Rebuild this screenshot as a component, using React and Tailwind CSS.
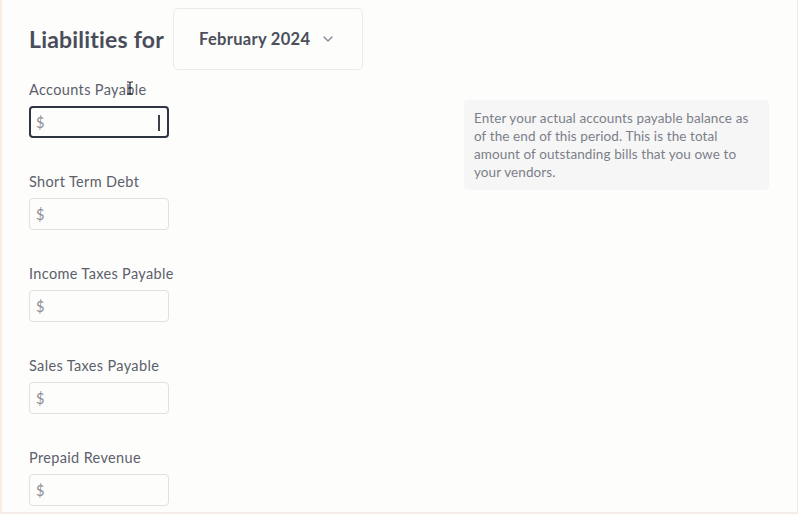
import React from "react";

const fields = [
  "Accounts Payable",
  "Short Term Debt",
  "Income Taxes Payable",
  "Sales Taxes Payable",
  "Prepaid Revenue",
];

export default function App() {
  return (
    <div
      className="w-[798px] h-[514px] bg-[#fdfdfc] border-l-2 border-l-[#fbece4] border-r border-r-[#ececec] border-b-2 border-b-[#f3ece8] overflow-hidden relative"
      style={{ fontFamily: "Lato, 'Open Sans', sans-serif" }}
    >
      <div className="flex items-center pl-[27px] pt-[8px]">
        <h1 className="text-[23px] font-bold text-[#494d59] tracking-[0.2px] mr-[9px]">Liabilities for</h1>
        <div className="w-[190px] h-[62px] border border-[#ebebee] rounded-[5px] flex items-center pl-[25px] bg-[#fdfdfc]">
          <span className="text-[16.5px] font-bold text-[#4b4f5a] tracking-[0.3px]">February 2024</span>
          <svg className="ml-[12px]" width="12" height="8" viewBox="0 0 12 8">
            <path d="M2 2 L6 6 L10 2" fill="none" stroke="#8d909a" strokeWidth="1.6" strokeLinecap="round" strokeLinejoin="round" />
          </svg>
        </div>
      </div>
      <div className="flex pl-[27px]">
        <div className="w-[435px] flex flex-col pt-[8px]">
          {fields.map((f, i) => (
            <div key={f} className="h-[92px]">
              <div className="text-[14.5px] tracking-[0.35px] text-[#5c606b] leading-[24px] h-[28px]">{f}</div>
              <div
                className={
                  i === 0
                    ? "w-[140px] h-[32px] rounded-[4px] border-2 border-[#2e3441] flex items-center pl-[5px] pt-[2px] relative"
                    : "w-[140px] h-[32px] rounded-[4px] border border-[#e0dfe3] flex items-center pl-[6px] pt-[2px]"
                }
              >
                <span className="text-[14.5px] text-[#8b8e96]">$</span>
                {i === 0 && <div className="absolute left-[127px] top-[7px] w-[1.5px] h-[16px] bg-[#3c4049]" />}
              </div>
            </div>
          ))}
        </div>
        <div className="pt-[30px]">
          <div className="w-[305px] bg-[#f6f6f7] rounded-[4px] px-[10px] py-[9px] text-[13.5px] tracking-[0.1px] leading-[18px] text-[#7c7f88]">
            Enter your actual accounts payable balance as of the end of this period. This is the total amount of outstanding bills that you owe to your vendors.
          </div>
        </div>
      </div>
      <svg className="absolute left-[124px] top-[81px]" width="8" height="14" viewBox="0 0 8 14">
        <path d="M1 1 H3 Q4 1 4 2.5 Q4 1 5 1 H7 M4 2.5 V11.5 M1 13 H3 Q4 13 4 11.5 Q4 13 5 13 H7 M2.5 7 H5.5" fill="none" stroke="#222" strokeWidth="1.2" />
      </svg>
    </div>
  );
}
